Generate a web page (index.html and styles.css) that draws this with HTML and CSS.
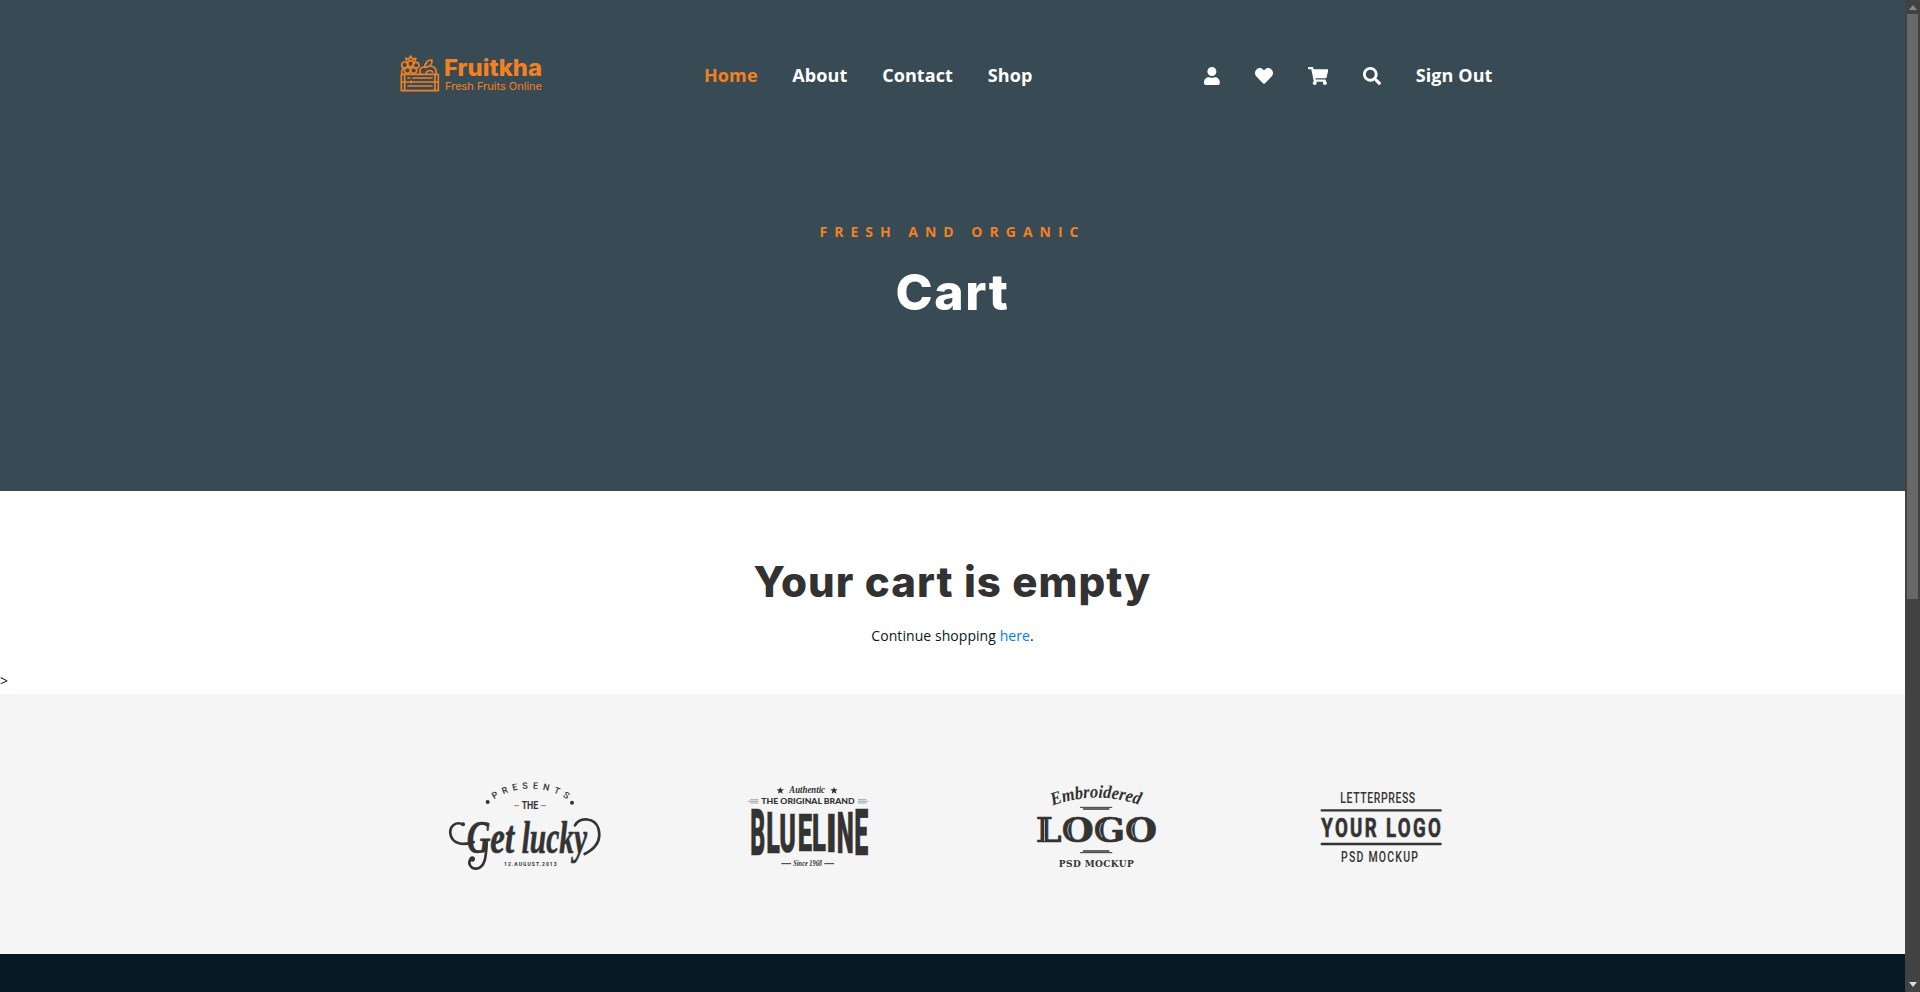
FILE: index.html
```html
<!DOCTYPE html>
<html lang="en">
<head>
<meta charset="utf-8">
<title>Cart</title>
<link rel="stylesheet" href="styles.css">
</head>
<body>
<div class="window">
<div class="page">
  <section class="hero">
    <header class="container header">
      <svg class="logo" viewBox="0 0 480 165">
        <g fill="none" stroke="#f28123" stroke-width="5" stroke-linejoin="round" stroke-linecap="round">
          <path d="M34 88H145V137H34ZM34 111H145M44 88V136M135 88V136M54 99H60M68 99H126M54 123H126M64 108V114"/>
          <circle cx="44" cy="60" r="9"/><circle cx="62" cy="56" r="9"/><circle cx="78" cy="61" r="9"/>
          <circle cx="52" cy="76" r="9"/><circle cx="71" cy="76" r="9"/>
          <path d="M50 47L47 40L57 42L62 33L68 42L78 40L74 48M37 86C33 80 35 73 42 70M92 87C86 75 93 63 105 67C104 62 106 57 110 55M110 66C126 58 141 68 138 86M104 67C105 53 113 44 126 45C127 57 119 66 107 67M109 86C108 77 122 73 128 81"/>
        </g>
        <text class="logo-name" x="162" y="92" textLength="294" lengthAdjust="spacingAndGlyphs">Fruitkha</text>
        <text class="logo-sub" x="165" y="134" textLength="291" lengthAdjust="spacingAndGlyphs">Fresh Fruits Online</text>
      </svg>
      <nav class="menu">
        <a class="active">Home</a><a>About</a><a>Contact</a><a>Shop</a>
      </nav>
      <div class="menu actions">
        <svg class="i-user" viewBox="0 0 448 512"><path d="M224 256c70.700 0 128-57.300 128-128S294.700 0 224 0 96 57.300 96 128s57.300 128 128 128zm89.600 32h-16.700c-22.200 10.200-46.900 16-72.900 16s-50.600-5.800-72.900-16h-16.700C60.200 288 0 348.200 0 422.400V464c0 26.500 21.500 48 48 48h352c26.500 0 48-21.500 48-48v-41.600c0-74.200-60.200-134.400-134.400-134.400z"/></svg>
        <svg class="i-square" viewBox="0 0 512 512"><path d="M462.300 62.600C407.500 15.900 326 24.300 275.700 76.200L256 96.500l-19.700-20.300C186.100 24.300 104.500 15.900 49.700 62.600c-62.800 53.600-66.100 149.800-9.900 207.900l193.500 199.800c12.500 12.900 32.800 12.900 45.300 0l193.500-199.800c56.300-58.100 53-154.300-9.800-207.900z"/></svg>
        <svg class="i-cart" viewBox="0 0 576 512"><path d="M528.120 301.319l47.273-208C578.806 78.301 567.391 64 551.990 64H159.208l-9.166-44.810C147.758 8.021 137.930 0 126.529 0H24C10.745 0 0 10.745 0 24v16c0 13.255 10.745 24 24 24h69.883l70.248 343.435C147.325 417.100 136 435.222 136 456c0 30.928 25.072 56 56 56s56-25.072 56-56c0-15.674-6.447-29.835-16.824-40h209.647C430.447 426.165 424 440.326 424 456c0 30.928 25.072 56 56 56s56-25.072 56-56c0-22.172-12.888-41.332-31.579-50.405l5.517-24.276c3.413-15.018-8.002-29.319-23.403-29.319H218.117l-6.545-32h293.145c11.206 0 20.920-7.754 23.403-18.681z"/></svg>
        <svg class="i-square" viewBox="0 0 512 512"><path d="M505 442.700L405.300 343c-4.500-4.500-10.600-7-17-7H372c27.600-35.300 44-79.700 44-128C416 93.100 322.900 0 208 0S0 93.100 0 208s93.100 208 208 208c48.300 0 92.700-16.400 128-44v16.300c0 6.400 2.500 12.500 7 17l99.700 99.700c9.400 9.400 24.600 9.400 33.900 0l28.300-28.300c9.400-9.400 9.400-24.600.1-34zM208 336c-70.700 0-128-57.200-128-128 0-70.700 57.200-128 128-128 70.700 0 128 57.200 128 128 0 70.700-57.200 128-128 128z"/></svg>
        <a>Sign Out</a>
      </div>
    </header>
    <p class="subtitle">Fresh and Organic</p>
    <h1>Cart</h1>
  </section>

  <main class="cart">
    <h2>Your cart is empty</h2>
    <p class="continue">Continue shopping <a>here</a>.</p>
    <p class="stray">&gt;</p>
  </main>

  <section class="brands">
    <div class="container brand-grid">
      <svg class="b1" viewBox="0 0 510 330">
        <path id="arc1" fill="none" d="M162 88A201 201 0 0 1 400 102"/>
        <text class="narrow medium" font-size="27"><textPath href="#arc1" textLength="232">PRESENTS</textPath></text>
        <circle cx="143" cy="96" r="6"/><circle cx="396" cy="98" r="6"/>
        <path class="line" stroke-width="3" opacity=".6" d="M224 107H236M304 107H317"/>
        <text class="narrow bold" x="245" y="118" font-size="33" textLength="50" lengthAdjust="spacingAndGlyphs">THE</text>
        <text class="script bold inked" x="80" y="248" font-size="138" textLength="142" lengthAdjust="spacingAndGlyphs">Get</text>
        <text class="script bold inked" x="245" y="248" font-size="138" textLength="196" lengthAdjust="spacingAndGlyphs">lucky</text>
        <path class="line" stroke-width="8" d="M70 164C48 152 29 168 31 190C34 220 68 228 101 216M140 220C138 255 137 294 109 296C91 297 82 278 93 265M405 166C420 139 465 143 475 175C486 214 462 238 434 252"/>
        <circle cx="69" cy="163" r="6"/><circle cx="97" cy="267" r="8"/>
        <text class="narrow bold" x="192" y="289" font-size="15" textLength="158">12.AUGUST.2013</text>
      </svg>
      <svg class="b2" viewBox="0 0 420 300">
        <path d="M121 36l3 7 8 0-6 5 2 8-7-4-7 4 2-8-6-5 8 0zM282 36l3 7 8 0-6 5 2 8-7-4-7 4 2-8-6-5 8 0z"/>
        <text class="script bold" x="148" y="55" font-size="32" textLength="107" lengthAdjust="spacingAndGlyphs">Authentic</text>
        <path class="line" stroke-width="2" opacity=".6" d="M25 79H54M32 74H54M32 84H54M355 79H384M355 74H378M355 84H378"/>
        <text class="lato" x="64" y="87" font-size="24" textLength="280" lengthAdjust="spacingAndGlyphs">THE ORIGINAL BRAND</text>
        <g class="block">
          <text transform="matrix(1 0 0 1.960 31 240)" textLength="45" lengthAdjust="spacingAndGlyphs">B</text>
          <text transform="matrix(1 0 0 1.740 79 234)" textLength="41" lengthAdjust="spacingAndGlyphs">L</text>
          <text transform="matrix(1 0 0 1.600 118 230)" textLength="50" lengthAdjust="spacingAndGlyphs">U</text>
          <text transform="matrix(1 0 0 1.530 173 228)" textLength="43" lengthAdjust="spacingAndGlyphs">E</text>
          <text transform="matrix(1 0 0 1.530 216 228)" textLength="42" lengthAdjust="spacingAndGlyphs">L</text>
          <text transform="matrix(1 0 0 1.620 258 230)" textLength="32" lengthAdjust="spacingAndGlyphs">I</text>
          <text transform="matrix(1 0 0 1.740 290 234)" textLength="51" lengthAdjust="spacingAndGlyphs">N</text>
          <text transform="matrix(1 0 0 1.960 343 240)" textLength="42" lengthAdjust="spacingAndGlyphs">E</text>
        </g>
        <path class="line" stroke-width="3" d="M125 266H152M254 266H281"/>
        <text class="script bold" x="160" y="274" font-size="26" textLength="86" lengthAdjust="spacingAndGlyphs">Since 1968</text>
      </svg>
      <svg class="b3" viewBox="-4.500 0 435 300">
        <path id="arc3" fill="none" d="M84 92Q215 44 352 92"/>
        <text class="script bold" font-size="55"><textPath href="#arc3" textLength="266" lengthAdjust="spacingAndGlyphs">Embroidered</textPath></text>
        <path class="line" stroke-width="3" d="M168 97H262M168 233H262"/>
        <path class="line" stroke-width="4" stroke-linecap="butt" stroke-dasharray="4 2" d="M177 102H254M177 228H254"/>
        <text class="serif bold inked" x="34" y="202" font-size="103" textLength="364" lengthAdjust="spacingAndGlyphs">LOGO</text>
        <path fill="none" stroke="#f5f5f5" stroke-width="2" d="M60 134V198M137 143Q122 164 137 187M233 143Q218 164 233 187M329 143Q314 164 329 187"/>
        <text class="serif bold" x="103" y="276" font-size="27" textLength="225">PSD MOCKUP</text>
      </svg>
      <svg class="b4" viewBox="0 0 420 270">
        <text class="narrow medium" transform="translate(91 70) scale(.7 1)" font-size="45" textLength="321">LETTERPRESS</text>
        <path class="line" stroke-width="7" stroke-linecap="butt" d="M35 91H392M35 192H392"/>
        <text class="narrow bold inked" transform="translate(34 171) scale(.7 1)" font-size="80" textLength="512">YOUR LOGO</text>
        <text class="narrow medium" transform="translate(93 246) scale(.7 1)" font-size="45" textLength="330">PSD MOCKUP</text>
      </svg>
    </div>
  </section>
  <footer class="footer"></footer>
</div>
<div class="scrollbar"><i class="up"></i><i class="thumb"></i><i class="down"></i></div>
</div>
</body>
</html>
```
FILE: styles.css
```css
* { box-sizing: border-box; }
body { margin: 0; font: 14px/25px "Open Sans", sans-serif; color: #051922; }
h1, h2, p { margin: 0; text-align: center; }
.window { display: flex; height: 992px; overflow: hidden; }
.page { width: 1905px; flex: none; display: flex; flex-direction: column; }
.container { width: 1140px; margin: 0 auto; }
.hero { height: 491px; background: #384b55; }
.header { display: flex; padding-top: 45px; height: 219px; align-items: flex-start; }
.logo { width: 160px; height: 55px; margin-left: 7.500px; }
.logo-name { font: 800 68px Inter, sans-serif; fill: #f28123; }
.logo-sub { font: 400 32px Inter, sans-serif; fill: #f28123; }
.menu { display: flex; align-items: center; height: 25px; margin: 18px 0 0 154px; gap: 34.700px; font-size: 18px; font-weight: 700; letter-spacing: .1px; color: #fff; white-space: nowrap; }
.menu .active { color: #f28123; }
.menu.actions { margin-left: auto; margin-right: 30px; gap: 34.900px; }
.actions svg { height: 18px; fill: #fff; }
.i-user { width: 15.750px; }
.i-square { width: 18px; }
.i-cart { width: 20.250px; }
.subtitle { color: #f28123; font-size: 14px; font-weight: 700; letter-spacing: 7px; text-transform: uppercase; }
h1 { margin-top: 18px; font: 800 50px/60px Inter, sans-serif; color: #fff; letter-spacing: 1.600px; }
.cart { height: 203px; padding-top: 64px; background: #fff; }
h2 { font: 800 42px/54px Inter, sans-serif; color: #323232; letter-spacing: 1.050px; }
.continue { margin-top: 14px; letter-spacing: .06px; }
.continue a { color: #007bff; }
.stray { margin-top: 20px; text-align: left; }
.brands { height: 260px; padding-top: 76px; background: #f5f5f5; }
.brand-grid { display: grid; grid-template-columns: repeat(4, 285px); height: 110px; align-items: center; justify-items: center; }
.brand-grid svg { fill: #333; overflow: visible; }
.b1 { width: 170px; height: 110px; }
.b2 { width: 140px; height: 100px; }
.b3 { width: 145px; height: 100px; }
.b4 { width: 140px; height: 90px; }
.narrow { font-family: Roboto, sans-serif; }
.lato { font-family: Lato, sans-serif; font-weight: 900; }
.script { font-family: "Liberation Serif", serif; font-style: italic; }
.serif { font-family: "DejaVu Serif", serif; }
.medium { font-weight: 500; }
.bold { font-weight: 700; }
.inked { stroke: #333; stroke-width: 2px; }
.block { font: 900 100px Roboto, sans-serif; stroke: #333; stroke-width: 1px; }
.line { fill: none; stroke: #333; stroke-linecap: round; }
.footer { flex: 1; background: #051922; }
.scrollbar { width: 15px; background: #424242; display: flex; flex-direction: column; align-items: center; padding: 5px 0; }
.up, .down { border: 4px solid transparent; border-top: 0; border-bottom: 5px solid #8a8a8a; }
.thumb { width: 11px; height: 585px; margin: 4px 0 auto; background: #686868; }
.down { border-bottom: 0; border-top: 5px solid #ddd; }
```
